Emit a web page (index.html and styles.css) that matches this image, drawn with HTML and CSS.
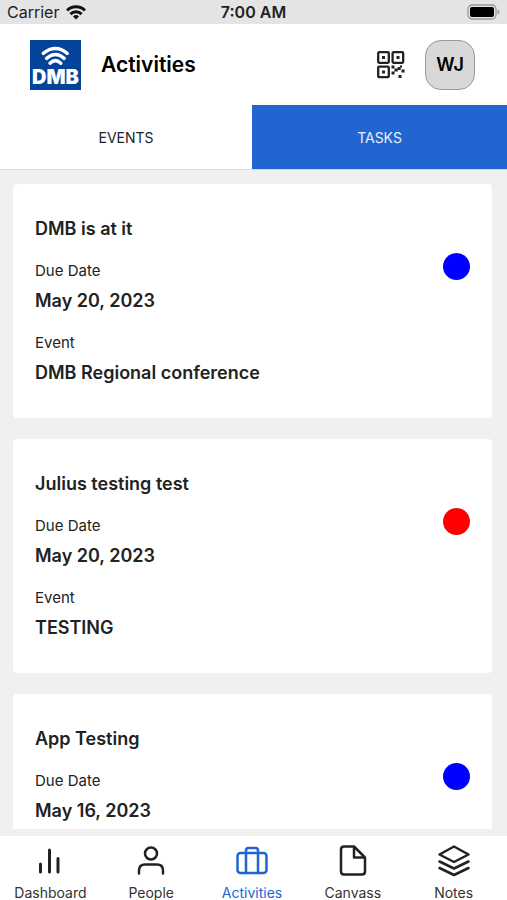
FILE: index.html
```html
<!DOCTYPE html>
<html lang="en">

<head>
    <meta charset="UTF-8">
    <meta name="viewport" content="width=device-width, initial-scale=1.0">
    <title>Activities</title>
    <link rel="stylesheet" href="styles.css">
</head>

<body>
    <div class="status">
        <div class="carrier">
            <span>Carrier</span>
            <svg width="20" height="15" viewBox="0 0 20 15" fill="none" stroke="#111" stroke-width="3">
                <path d="M1 5.5a12.7 12.7 0 0 1 18 0"/>
                <path d="M4.4 9.1a7.9 7.9 0 0 1 11.2 0"/>
                <path d="M10 14.5l-3-3a4.3 4.3 0 0 1 6 0z" fill="#111" stroke="none"/>
            </svg>
        </div>
        <div class="time">7:00 AM</div>
        <div class="battery">
            <svg width="33" height="16" viewBox="0 0 33 16">
                <rect x="1" y="1" width="28" height="14" rx="4" fill="#e4e4e4" stroke="#999" stroke-width="1.3"/>
                <rect x="3" y="3" width="24" height="10" rx="2" fill="#000"/>
                <path d="M30.5 5.5q2 .7 2 2.5t-2 2.5z" fill="#999"/>
            </svg>
        </div>
    </div>

    <header class="header">
        <svg class="logo" width="51" height="50" viewBox="0 0 51 50">
            <rect width="51" height="50" fill="#04439a"/>
            <g fill="none" stroke="#fff" stroke-width="3.4" stroke-linecap="round">
                <path d="M13.3 13.4Q25.5 3.7 37.2 13.4"/>
                <path d="M16.6 18.4Q25.5 10.8 34.2 18.4"/>
                <path d="M20 23.2Q25.5 18.1 30.8 23.2"/>
            </g>
            <text x="25.5" y="44" text-anchor="middle" class="logo-text">DMB</text>
        </svg>
        <h1>Activities</h1>
        <button type="button" class="qr" aria-label="QR code">
            <svg width="28" height="28" viewBox="0 0 28 28">
                <g fill="none" stroke="#222" stroke-width="2.3">
                    <rect x="1.2" y="1.2" width="10.6" height="10.6" rx="1"/>
                    <rect x="15.6" y="1.2" width="10.6" height="10.6" rx="1"/>
                    <rect x="1.2" y="15.6" width="10.6" height="10.6" rx="1"/>
                </g>
                <path fill="#222" d="M5 5h3v3H5zM19.500 5h3v3h-3zM5 19.500h3v3H5zM14.500 14.500h3v3h-3zM17.500 17.500h3.200v3h-3.200zM20.700 16h3v3h-3zM14.500 20.500h3v3h-3zM24.500 18.500h3v3h-3zM21.500 24h3v3h-3zM23 14.500h2v2h-2z"/>
            </svg>
        </button>
        <button type="button" class="avatar">WJ</button>
    </header>

    <div class="tabs">
        <button type="button" class="tab">EVENTS</button>
        <button type="button" class="tab active">TASKS</button>
    </div>

    <main class="list">
        <article class="card">
            <div class="info">
                <h2>DMB is at it</h2>
                <dl>
                    <dt>Due Date</dt>
                    <dd>May 20, 2023</dd>
                    <dt>Event</dt>
                    <dd>DMB Regional conference</dd>
                </dl>
            </div>
            <span class="dot blue"></span>
        </article>
        <article class="card">
            <div class="info">
                <h2>Julius testing test</h2>
                <dl>
                    <dt>Due Date</dt>
                    <dd>May 20, 2023</dd>
                    <dt>Event</dt>
                    <dd>TESTING</dd>
                </dl>
            </div>
            <span class="dot red"></span>
        </article>
        <article class="card">
            <div class="info">
                <h2>App Testing</h2>
                <dl>
                    <dt>Due Date</dt>
                    <dd>May 16, 2023</dd>
                </dl>
            </div>
            <span class="dot blue"></span>
        </article>
    </main>

    <nav class="nav">
        <a href="#">
            <svg width="34" height="34" viewBox="0 0 34 34">
                <path d="M7.5 20v8M16.5 6v22M25 14.500v13.500" stroke-width="3"/>
            </svg>
            <span>Dashboard</span>
        </a>
        <a href="#">
            <svg width="34" height="34" viewBox="0 0 34 34">
                <circle cx="17" cy="9.500" r="6"/>
                <path d="M5 29.500v-3q0-6 6-6h12q6 0 6 6v3"/>
            </svg>
            <span>People</span>
        </a>
        <a href="#" class="active">
            <svg width="34" height="34" viewBox="0 0 34 34">
                <rect x="2.500" y="9" width="29" height="20" rx="3"/>
                <path d="M11 29V6.500Q11 4 13.500 4h7Q23 4 23 6.500V29"/>
            </svg>
            <span>Activities</span>
        </a>
        <a href="#">
            <svg width="34" height="34" viewBox="0 0 34 34">
                <path d="M18 2.500H8q-3 0-3 3v22q0 3 3 3h18q3 0 3-3v-14zM18 2.500v11h11"/>
            </svg>
            <span>Canvass</span>
        </a>
        <a href="#">
            <svg width="34" height="34" viewBox="0 0 34 34">
                <path d="M17 2.500l14.500 8L17 18 2.500 10.500z"/>
                <path d="M2.500 17.500L17 24.500l14.500-7M2.500 24l14.500 7 14.500-7"/>
            </svg>
            <span>Notes</span>
        </a>
    </nav>
</body>

</html>
```

FILE: styles.css
```css
* {
    box-sizing: border-box;
}

body {
    display: flex;
    flex-direction: column;
    height: 100vh;
    margin: 0;
    background: #f0f0f0;
    color: #222;
    font-family: Inter, "Liberation Sans", sans-serif;
}

button {
    padding: 0;
    border: 0;
    background: none;
    color: inherit;
    font-family: inherit;
}

h1, h2, dl, dd {
    margin: 0;
}

svg {
    display: block;
}

/* status bar */
.status {
    display: grid;
    grid-template-columns: 1fr auto 1fr;
    align-items: center;
    height: 24px;
    padding: 0 7px;
    background: #e4e4e4;
    font-size: 16px;
}

.carrier {
    display: flex;
    align-items: center;
    gap: 7px;
}

.time {
    font-weight: 600;
}

.battery {
    justify-self: end;
}

/* header */
.header {
    display: flex;
    align-items: center;
    height: 81px;
    padding: 0 32px 0 30px;
    background: #fff;
}

.logo-text {
    fill: #fff;
    font-size: 20px;
    font-weight: 900;
}

h1 {
    flex: 1;
    margin-left: 20px;
    color: #000;
    font-size: 21px;
    font-weight: 600;
}

.avatar {
    width: 50px;
    height: 50px;
    margin-left: 20px;
    border: 1px solid #999;
    border-radius: 16px;
    background: #d8d8d8;
    color: #000;
    font-size: 18px;
    font-weight: 600;
}

/* tabs */
.tabs {
    display: grid;
    grid-template-columns: 252fr 255fr;
    height: 65px;
}

.tab {
    border-bottom: 1px solid #ddd;
    background: #fff;
    font-size: 14px;
}

.tab.active {
    border-bottom-color: #c5dcfb;
    background: #2165d1;
    color: #e6effc;
}

/* cards */
.list {
    display: flex;
    flex: 1;
    flex-direction: column;
    gap: 21px;
    min-height: 0;
    margin: 14px 15px 7px 13px;
    overflow-y: auto;
    scrollbar-width: none;
}

.card {
    display: flex;
    flex-shrink: 0;
    padding: 33px 22px;
    border-radius: 4px;
    background: #fff;
}

.info {
    flex: 1;
}

h2, dd {
    font-size: 18px;
    font-weight: 600;
    line-height: 24px;
}

dt {
    margin-top: 20px;
    font-size: 15px;
    line-height: 20px;
}

dd {
    margin-top: 8px;
}

.dot {
    width: 27px;
    height: 27px;
    margin-top: 36px;
    border-radius: 50%;
}

.blue {
    background: #00f;
}

.red {
    background: #f00;
}

/* bottom nav */
.nav {
    display: grid;
    grid-template-columns: repeat(5, 1fr);
    height: 64px;
    padding: 8px 3px 0 0;
    background: #fff;
}

.nav a {
    display: flex;
    flex-direction: column;
    align-items: center;
    gap: 7px;
    color: #333;
    font-size: 14px;
    line-height: 15px;
    text-decoration: none;
}

.nav svg {
    fill: none;
    stroke: #222;
    stroke-width: 2.5;
    stroke-linecap: round;
    stroke-linejoin: round;
}

.nav .active {
    color: #2165d1;
}

.nav .active svg {
    stroke: #2165d1;
}
```
